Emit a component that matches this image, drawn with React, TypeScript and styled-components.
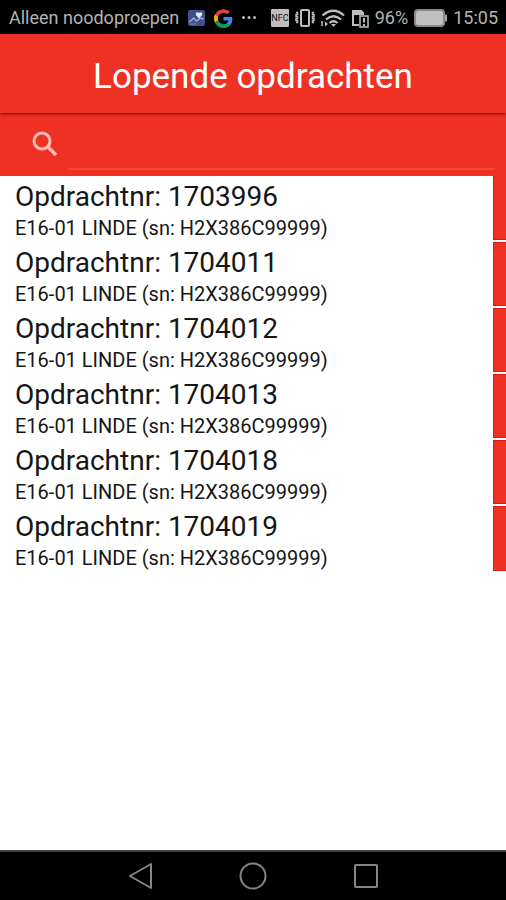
import React from "react";
import styled, { createGlobalStyle } from "styled-components";

const GlobalStyle = createGlobalStyle`
  * { box-sizing: border-box; }
  body { margin: 0; background: #fff; font-family: Roboto, "Liberation Sans", sans-serif; }
`;

const RED = "#ef3124";

const Screen = styled.div`
  display: flex;
  flex-direction: column;
  min-height: 100vh;
  background: #fff;
`;

const StatusBar = styled.div`
  display: flex;
  align-items: center;
  justify-content: space-between;
  height: 34px;
  padding: 2px 8px 0 9px;
  background: #000;
  color: #b4b4b4;
  font-size: 18px;
  line-height: 24px;
  white-space: nowrap;
`;

const StatusGroup = styled.div<{ $gap: number }>`
  display: flex;
  align-items: center;
  gap: ${(p) => p.$gap}px;
  svg { display: block; flex: none; }
`;

const Header = styled.header`
  position: relative;
  display: flex;
  align-items: center;
  justify-content: center;
  height: 79px;
  padding-top: 6px;
  background: ${RED};
  box-shadow: 0 1px 3px rgba(60, 0, 0, 0.75);
`;

const Title = styled.h1`
  margin: 0;
  color: #fff;
  font-size: 35px;
  line-height: 44px;
  font-weight: 400;
`;

const SearchBar = styled.form`
  display: flex;
  align-items: stretch;
  gap: 10px;
  height: 63px;
  padding: 0 11px 6px 32px;
  background: ${RED};
`;

const SearchLabel = styled.label`
  display: flex;
  align-items: center;
  padding-top: 4px;
  svg { display: block; }
`;

const SearchInput = styled.input`
  flex: 1;
  min-width: 0;
  padding: 0;
  border: 0;
  border-bottom: 2px solid #f34a3b;
  outline: none;
  background: transparent;
  color: #fff;
  font: 24px Roboto, sans-serif;
`;

const OrderList = styled.ul`
  flex: 1;
  margin: 0;
  padding: 0;
  list-style: none;
`;

const OrderRow = styled.li`
  display: flex;
  height: 66px;
`;

const OrderButton = styled.button`
  flex: 1;
  padding: 4px 0 0 15px;
  border: 0;
  background: #fff;
  color: #161616;
  font-family: inherit;
  text-align: left;
`;

const OrderNumber = styled.span`
  display: block;
  font-size: 28px;
  line-height: 34px;
`;

const OrderDetail = styled.span`
  display: block;
  font-size: 20px;
  line-height: 29px;
`;

const RowAccent = styled.span`
  width: 13px;
  margin-bottom: 2px;
  border: 1px solid #d81c1c;
  border-right: 0;
  background: ${RED};
  ${OrderRow}:first-child & { border-top: 0; }
  ${OrderRow}:last-child & { margin-bottom: 1px; }
`;

const NavBar = styled.nav`
  display: grid;
  grid-template-columns: repeat(3, 113px);
  justify-content: center;
  height: 50px;
  border-top: 2px solid #444;
  background: #000;
`;

const NavButton = styled.button`
  display: flex;
  align-items: center;
  justify-content: center;
  padding: 0;
  border: 0;
  background: transparent;
  svg { display: block; }
`;

const GalleryIcon = () => (
  <svg width="19" height="18" viewBox="0 0 18 18" aria-hidden="true">
    <rect x="0.5" y="1" width="17" height="16" rx="2" fill="#3d528c" />
    <path d="M2 13l4-4 3 3 4-3 3 1" fill="none" stroke="#9aa9ce" strokeWidth="1.500" />
    <path d="M11.500 9.500L8.500 6C7.500 3 10.500 2.500 11.500 4.300C12.500 2.500 15.500 3 14.500 6Z" fill="#e8edf7" />
    <path d="M2 15h7" stroke="#7387b8" />
  </svg>
);

const GoogleIcon = () => (
  <svg width="19" height="19" viewBox="0 0 48 48" aria-hidden="true">
    <path fill="#db4437" d="M24 10c3.500 0 6.600 1.200 9 3.500l6.800-6.700C35.800 2.800 30.400.500 24 .500 14.700.500 6.700 5.800 2.700 13.600l7.800 6C12.400 14 17.700 10 24 10z" />
    <path fill="#4285f4" d="M46.500 24.500c0-1.600-.2-3.100-.4-4.500H24v9h12.700c-.6 3-2.300 5.400-4.700 7.100l7.600 5.900c4.400-4.100 6.900-10.200 6.900-17.500z" />
    <path fill="#f4b400" d="M10.500 28.600A14.500 14.500 0 0 1 10.500 19.500l-7.900-6a23.500 23.500 0 0 0 0 21.200z" />
    <path fill="#0f9d58" d="M24 48c6.500 0 11.900-2.100 15.900-5.800L32.200 36.200c-2.200 1.500-4.900 2.300-8.200 2.300-6.300 0-11.600-4.200-13.500-9.900l-7.900 6C6.500 42.600 14.600 48 24 48z" />
  </svg>
);

const DotsIcon = () => (
  <svg width="16" height="18" viewBox="0 0 16 18" fill="#bcbcbc" aria-hidden="true">
    <circle cx="2.500" cy="8.500" r="1.500" />
    <circle cx="8" cy="8.500" r="1.500" />
    <circle cx="13.500" cy="8.500" r="1.500" />
  </svg>
);

const NfcIcon = () => (
  <svg width="18" height="18" viewBox="0 0 18 18" aria-label="NFC">
    <rect width="18" height="18" rx="1" fill="#bdbdbd" />
    <text x="9" y="12" textAnchor="middle" fontFamily="Roboto, sans-serif" fontSize="9" fill="#111">NFC</text>
  </svg>
);

const VibrateIcon = () => (
  <svg width="20" height="18" viewBox="0 0 20 18" fill="none" stroke="#bdbdbd" aria-hidden="true">
    <rect x="6" y="1" width="8" height="16" rx="1" strokeWidth="2" />
    <path d="M1 3.500h1.500v2H1v2h1.500v2H1v2h1.500v2H1M19 3.500h-1.500v2H19v2h-1.500v2H19v2h-1.500v2H19" strokeWidth="1.500" />
  </svg>
);

const WifiIcon = () => (
  <svg width="24" height="19" viewBox="0 0 24 19" fill="none" stroke="#bdbdbd" aria-hidden="true">
    <path d="M1.500 6.500Q12.500-3 23 6.500M5 10.500Q12.500 4 20 10.500M8.500 14Q12.500 10.500 16.500 14" strokeWidth="2.200" />
    <path d="M12.500 18l-2.500-3h5z" fill="#bdbdbd" stroke="none" />
    <path d="M1 12v5" strokeWidth="1.500" />
    <path d="M4 12.500l3 2.500-3 2.500z" fill="#bdbdbd" stroke="none" />
  </svg>
);

const SimAlertIcon = () => (
  <svg width="18" height="19" viewBox="0 0 18 19" fill="none" stroke="#bdbdbd" aria-hidden="true">
    <path d="M8 16H2V2h8l2 2v2" strokeWidth="2" />
    <path d="M2 2h8l2 2v2H2z" fill="#bdbdbd" stroke="none" />
    <rect x="9" y="7" width="8" height="11" fill="#000" stroke="#bdbdbd" strokeWidth="1.500" />
    <path d="M13 9v4.500M13 15v2" strokeWidth="2" />
  </svg>
);

const BatteryIcon = () => (
  <svg width="33" height="18" viewBox="0 0 33 18" aria-hidden="true">
    <rect x="1" y="1" width="29" height="16" rx="3" fill="#bfbfbf" stroke="#888" strokeWidth="2" />
    <path d="M31 5.500h1a1 1 0 0 1 1 1v5a1 1 0 0 1-1 1h-1z" fill="#a2a2a2" />
  </svg>
);

const SearchIcon = () => (
  <svg width="26" height="26" viewBox="0 0 26 26" fill="none" stroke="#fbbdb5" aria-hidden="true">
    <circle cx="10" cy="10" r="8" strokeWidth="3" />
    <path d="M15.500 15.500L24 24" strokeWidth="3.500" />
  </svg>
);

const orders = ["1703996", "1704011", "1704012", "1704013", "1704018", "1704019"];

export default function App() {
  return (
    <Screen>
      <GlobalStyle />
      <StatusBar>
        <StatusGroup $gap={8}>
          <span>Alleen noodoproepen</span>
          <GalleryIcon />
          <GoogleIcon />
          <DotsIcon />
        </StatusGroup>
        <StatusGroup $gap={6}>
          <NfcIcon />
          <VibrateIcon />
          <WifiIcon />
          <SimAlertIcon />
          <span>96%</span>
          <BatteryIcon />
          <span>15:05</span>
        </StatusGroup>
      </StatusBar>
      <Header>
        <Title>Lopende opdrachten</Title>
      </Header>
      <SearchBar role="search">
        <SearchLabel htmlFor="order-search" aria-label="Zoeken">
          <SearchIcon />
        </SearchLabel>
        <SearchInput id="order-search" type="text" />
      </SearchBar>
      <OrderList>
        {orders.map((number) => (
          <OrderRow key={number}>
            <OrderButton type="button">
              <OrderNumber>Opdrachtnr: {number}</OrderNumber>
              <OrderDetail>E16-01 LINDE (sn: H2X386C99999)</OrderDetail>
            </OrderButton>
            <RowAccent />
          </OrderRow>
        ))}
      </OrderList>
      <NavBar>
        <NavButton type="button" aria-label="Terug">
          <svg width="26" height="28" viewBox="0 0 26 28" fill="none" stroke="#858585" strokeWidth="2" strokeLinejoin="round">
            <path d="M3 14L24 2v24z" />
          </svg>
        </NavButton>
        <NavButton type="button" aria-label="Start">
          <svg width="28" height="28" viewBox="0 0 28 28" fill="none" stroke="#858585" strokeWidth="2">
            <circle cx="14" cy="14" r="12.500" />
          </svg>
        </NavButton>
        <NavButton type="button" aria-label="Recente apps">
          <svg width="26" height="26" viewBox="0 0 26 26" fill="none" stroke="#858585" strokeWidth="2">
            <rect x="2" y="2" width="22" height="22" rx="1" />
          </svg>
        </NavButton>
      </NavBar>
    </Screen>
  );
}
